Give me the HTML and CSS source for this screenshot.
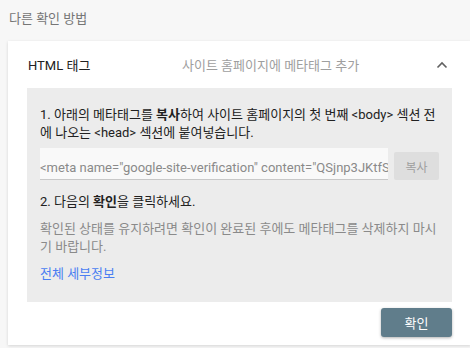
FILE: index.html
```html
<!DOCTYPE html>
<html lang="ko">
<head>
    <meta charset="UTF-8">
    <meta name="viewport" content="width=device-width, initial-scale=1.0">
    <title>다른 확인 방법</title>
    <link rel="stylesheet" href="styles.css">
</head>
<body>
    <div class="page">
        <div class="section-title">다른 확인 방법</div>
        <div class="card">
            <div class="card-header">
                <div class="method-name">HTML 태그</div>
                <div class="method-desc">사이트 홈페이지에 메타태그 추가</div>
                <svg class="chevron" width="12" height="8" viewBox="0 0 12 8">
                    <path d="M1.5 6.5 L6 2 L10.5 6.5" fill="none" stroke="#616161" stroke-width="1.6"/>
                </svg>
            </div>
            <div class="card-body">
                <p class="step">1. 아래의 메타태그를 <b>복사</b>하여 사이트 홈페이지의 첫 번째 &lt;body&gt; 섹션 전에 나오는 &lt;head&gt; 섹션에 붙여넣습니다.</p>
                <div class="copy-row">
                    <input class="meta-input" type="text" readonly value='<meta name="google-site-verification" content="QSjnp3JKtfS6wD2vX9" />'>
                    <button class="copy-btn">복사</button>
                </div>
                <p class="step step-two">2. 다음의 <b>확인</b>을 클릭하세요.</p>
                <p class="note">확인된 상태를 유지하려면 확인이 완료된 후에도 메타태그를 삭제하지 마시기 바랍니다.</p>
                <a class="details" href="#">전체 세부정보</a>
            </div>
            <div class="card-footer">
                <button class="confirm-btn">확인</button>
            </div>
        </div>
    </div>
</body>
</html>
```

FILE: styles.css
```css
body {
    margin: 0;
    font-family: Roboto, "Noto Sans CJK KR", sans-serif;
    background-color: #f7f7f7;
    overflow: hidden;
    width: 470px;
    height: 348px;
}
.page {
    padding-top: 10px;
}
.section-title {
    font-size: 13px;
    line-height: 18px;
    color: #757575;
    margin-left: 9px;
    margin-bottom: 13px;
}
.card {
    width: 463px;
    margin-left: 8px;
    background-color: #fff;
    box-shadow: 0 1px 3px rgba(0, 0, 0, 0.14);
}
.card-header {
    display: flex;
    align-items: center;
    height: 47px;
    padding: 0 23px 0 20px;
}
.method-name {
    width: 154px;
    font-size: 13px;
    color: #212121;
}
.method-desc {
    flex: 1;
    font-size: 13px;
    color: #9e9e9e;
}
.chevron {
    display: block;
}
.card-body {
    margin: 0 19px;
    padding: 18px 13px 19px;
    background-color: #ececec;
}
.step {
    margin: 0;
    font-size: 13px;
    line-height: 18px;
    color: #212121;
}
.step b {
    font-weight: bold;
}
.copy-row {
    display: flex;
    align-items: flex-end;
    gap: 6px;
    margin-top: 6px;
}
.meta-input {
    flex: 1;
    min-width: 0;
    height: 32px;
    box-sizing: border-box;
    padding: 8px 0 0 0;
    border: none;
    border-bottom: 1px solid #c8c8c8;
    background-color: #f9f9f9;
    font-family: Roboto, sans-serif;
    font-size: 13px;
    color: #8a8a8a;
    outline: none;
}
.copy-btn {
    width: 45px;
    height: 28px;
    border: none;
    border-radius: 2px;
    background-color: #dedede;
    color: #9e9e9e;
    font-family: "Noto Sans CJK KR", sans-serif;
    font-size: 12px;
    padding: 0;
}
.step-two {
    margin-top: 13px;
}
.note {
    margin: 9px 0 0;
    font-size: 13px;
    line-height: 18px;
    color: #8a8a8a;
}
.details {
    display: inline-block;
    margin-top: 9px;
    font-size: 13px;
    line-height: 18px;
    color: #4a7ef2;
    text-decoration: none;
}
.card-footer {
    display: flex;
    justify-content: flex-end;
    padding: 6px 19px 8px;
}
.confirm-btn {
    width: 71px;
    height: 29px;
    border: none;
    border-radius: 3px;
    background-color: #607d8b;
    color: #fff;
    font-family: "Noto Sans CJK KR", sans-serif;
    font-size: 13px;
    box-shadow: 0 1px 3px rgba(0, 0, 0, 0.3);
    padding: 0;
}
```
